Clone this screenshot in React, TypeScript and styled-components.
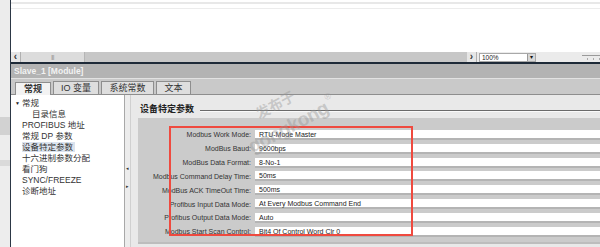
import styled, { createGlobalStyle } from "styled-components";

const fields = [
  { label: "Modbus Work Mode:", value: "RTU-Mode Master" },
  { label: "ModBus Baud:", value: "9600bps" },
  { label: "ModBus Data Format:", value: "8-No-1" },
  { label: "Modbus Command Delay Time:", value: "50ms" },
  { label: "ModBus ACK TimeOut Time:", value: "500ms" },
  { label: "Profibus Input Data Mode:", value: "At Every Modbus Command End" },
  { label: "Profibus Output Data Mode:", value: "Auto" },
  { label: "Modbus Start Scan Control:", value: "Bit4 Of Control Word Clr 0" },
];

const tree = [
  { text: "常规", level: 0, open: true },
  { text: "目录信息", level: 2 },
  { text: "PROFIBUS 地址", level: 1 },
  { text: "常规 DP 参数", level: 1 },
  { text: "设备特定参数", level: 1, selected: true },
  { text: "十六进制参数分配", level: 1 },
  { text: "看门狗", level: 1 },
  { text: "SYNC/FREEZE", level: 1 },
  { text: "诊断地址", level: 1 },
];

const tabs = [
  { text: "常规", width: 36 },
  { text: "IO 变量", width: 46 },
  { text: "系统常数", width: 53 },
  { text: "文本", width: 35 },
];

function App() {
  return (
    <Page>
      <GlobalStyle />
      <Strip />
      <Main>
        <Canvas />
        <ScrollRow>
          <ArrowBtn>‹</ArrowBtn>
          <Thumb>|||</Thumb>
          <Track />
          <ArrowBtn>›</ArrowBtn>
          <ZoomArea>
            <ZoomBox>
              <span>100%</span>
              <DropBtn>▾</DropBtn>
            </ZoomBox>
            <Slider />
          </ZoomArea>
        </ScrollRow>
        <DarkLine />
        <TitleBar>Slave_1 [Module]</TitleBar>
        <TabBar>
          {tabs.map((t, i) => (
            <Tab key={t.text} $active={i === 0} $width={t.width}>
              {t.text}
            </Tab>
          ))}
        </TabBar>
        <Body>
          <Tree>
            {tree.map((item) => (
              <TreeItem key={item.text} $level={item.level}>
                {item.open && <Caret>▼</Caret>}
                <TreeText $selected={item.selected}>{item.text}</TreeText>
              </TreeItem>
            ))}
          </Tree>
          <Splitter>
            <SplitArrow>◂</SplitArrow>
            <SplitArrow>▸</SplitArrow>
          </Splitter>
          <Content>
            <SectionTitle>
              <span>设备特定参数</span>
              <Rule />
            </SectionTitle>
            <Box>
              {fields.map((f) => (
                <Row key={f.label}>
                  <Label>{f.label}</Label>
                  <Input>{f.value}</Input>
                </Row>
              ))}
              <Highlight />
            </Box>
          </Content>
        </Body>
      </Main>
      <Watermark>
        <WmCn>发布于</WmCn>
        <WmEn>
          gongkong<sup>®</sup>
        </WmEn>
      </Watermark>
    </Page>
  );
}

export default App;

const GlobalStyle = createGlobalStyle`
  html, body {
    margin: 0;
    padding: 0;
    background: #ffffff;
  }
  body {
    font-family: "Liberation Sans", "Noto Sans CJK SC", sans-serif;
    color: #333;
  }
`;

const Page = styled.div`
  position: relative;
  display: flex;
  width: 600px;
  height: 247px;
  overflow: hidden;
`;

const Strip = styled.div`
  width: 10px;
  flex: none;
  background:
    linear-gradient(#ececec, #ececec) 0 0 / 100% 60px no-repeat,
    linear-gradient(#d2d2d2, #d2d2d2) 0 117px / 100% 18px no-repeat,
    linear-gradient(#dadada, #dadada) 0 160px / 100% 6px no-repeat,
    #ededed;
`;

const Main = styled.div`
  flex: 1;
  display: flex;
  flex-direction: column;
  border-left: 1px solid #2c3745;
  min-width: 0;
`;

const Canvas = styled.div`
  height: 50px;
  background: #fff;
  border-top: 2px solid #fff;
  box-shadow: inset 0 2px 0 #e8e8e8, inset 0 6px 0 #fff, inset 0 7px 0 #ececec;
`;

const ScrollRow = styled.div`
  height: 10px;
  display: flex;
  align-items: stretch;
  background: #c7c7c7;
`;

const ArrowBtn = styled.div`
  width: 9px;
  background: #e6e6e6;
  border-right: 1px solid #b0b0b0;
  font-size: 10px;
  line-height: 9px;
  text-align: center;
  color: #333;
  font-weight: bold;
`;

const Thumb = styled.div`
  width: 63px;
  background: #dcdcdc;
  border-right: 1px solid #b5b5b5;
  font-size: 5px;
  line-height: 10px;
  letter-spacing: -0.5px;
  text-align: center;
  color: #777;
`;

const Track = styled.div`
  flex: 1;
`;

const ZoomArea = styled.div`
  width: 121px;
  display: flex;
  align-items: center;
  background: #ebebeb;
  padding-left: 2px;
`;

const ZoomBox = styled.div`
  width: 57px;
  height: 9px;
  display: flex;
  justify-content: space-between;
  align-items: center;
  background: #fff;
  border: 1px solid #a8a8a8;
  box-sizing: border-box;
  font-size: 6.5px;
  color: #222;
  padding-left: 2px;
`;

const DropBtn = styled.span`
  width: 7px;
  height: 7px;
  background: #d8d8d8;
  border-left: 1px solid #999;
  font-size: 6px;
  line-height: 7px;
  text-align: center;
  color: #111;
`;

const Slider = styled.div`
  margin-left: auto;
  width: 18px;
  height: 4px;
  border-top: 1px solid #9a9a9a;
  background: repeating-linear-gradient(90deg, transparent 0 5px, #aaa 5px 6px) 0 2px / 100% 2px no-repeat;
`;

const DarkLine = styled.div`
  height: 2px;
  background: #1e2a38;
`;

const TitleBar = styled.div`
  height: 14px;
  background: #b3b3b3;
  color: #f2f2f2;
  font-size: 8.5px;
  font-weight: bold;
  line-height: 14px;
  padding-left: 3px;
`;

const TabBar = styled.div`
  height: 15px;
  background: #c9c9c9;
  border-top: 1px solid #e2e2e2;
  border-bottom: 1px solid #8e8e8e;
  display: flex;
  align-items: flex-end;
  gap: 2px;
  padding-left: 4px;
`;

const Tab = styled.div<{ $active?: boolean; $width: number }>`
  width: ${(p) => p.$width}px;
  height: 13px;
  box-sizing: border-box;
  background: ${(p) => (p.$active ? "#f3f3f3" : "#dedede")};
  border: 1px solid #8e8e8e;
  border-bottom: none;
  margin-bottom: ${(p) => (p.$active ? "-1px" : "0")};
  font-size: 9px;
  font-weight: ${(p) => (p.$active ? "bold" : "normal")};
  line-height: 12px;
  text-align: center;
  color: #333;
`;

const Body = styled.div`
  flex: 1;
  display: flex;
  min-height: 0;
`;

const Tree = styled.div`
  width: 113px;
  background: #fff;
  padding-top: 2px;
`;

const TreeItem = styled.div<{ $level: number }>`
  height: 11px;
  display: flex;
  align-items: center;
  padding-left: ${(p) => (p.$level === 0 ? 4 : p.$level === 1 ? 11 : 21)}px;
  font-size: 8.5px;
  color: #333;
`;

const Caret = styled.span`
  font-size: 5px;
  width: 7px;
  color: #222;
`;

const TreeText = styled.span<{ $selected?: boolean }>`
  background: ${(p) => (p.$selected ? "#dbe3ee" : "transparent")};
  line-height: 10px;
  padding-right: 2px;
`;

const Splitter = styled.div`
  width: 5px;
  background: #ececec;
  border-left: 1px solid #a8a8a8;
  border-right: 1px solid #d0d0d0;
  display: flex;
  flex-direction: column;
  align-items: center;
  padding-top: 70px;
  gap: 12px;
`;

const SplitArrow = styled.span`
  font-size: 5px;
  line-height: 6px;
  color: #333;
`;

const Content = styled.div`
  flex: 1;
  background: #e9e9e9;
  padding: 8px 0 0 7px;
  display: flex;
  flex-direction: column;
`;

const SectionTitle = styled.div`
  display: flex;
  align-items: center;
  gap: 6px;
  height: 10px;
  font-size: 9px;
  font-weight: bold;
  color: #222;
  padding-left: 2px;
`;

const Rule = styled.div`
  flex: 1;
  height: 1px;
  margin-top: 5px;
  background: #6a6a6a;
  box-shadow: 0 1px 0 #fafafa;
`;

const Box = styled.div`
  position: relative;
  margin-top: 5px;
  height: 126px;
  box-sizing: border-box;
  background: #cbcbcb;
  border-bottom: 2px solid #bdbdbd;
  padding-top: 10px;
`;

const Row = styled.div`
  height: 13.85px;
  display: flex;
  align-items: center;
  gap: 4px;
`;

const Label = styled.div`
  width: 113px;
  flex: none;
  text-align: right;
  font-size: 7px;
  color: #333;
  white-space: nowrap;
`;

const Input = styled.div`
  flex: 1;
  height: 10px;
  box-sizing: border-box;
  background: #fff;
  border-bottom: 2px solid #b4b4b4;
  font-size: 7px;
  line-height: 9px;
  padding-left: 4px;
  color: #222;
  white-space: nowrap;
`;

const Highlight = styled.div`
  position: absolute;
  left: 31px;
  top: 8px;
  width: 244px;
  height: 110px;
  border: 2px solid #ef4a3f;
  box-sizing: border-box;
  pointer-events: none;
`;

const Watermark = styled.div`
  position: absolute;
  left: 254px;
  top: 114px;
  transform: rotate(-28deg);
  transform-origin: left bottom;
  color: rgba(150, 150, 150, 0.42);
  pointer-events: none;
  display: flex;
  flex-direction: column;
  align-items: flex-start;
`;

const WmCn = styled.div`
  font-size: 14px;
  font-weight: bold;
  margin-left: 22px;
  line-height: 15px;
`;

const WmEn = styled.div`
  font-family: "Liberation Sans", sans-serif;
  font-size: 19px;
  font-weight: bold;
  line-height: 18px;
  letter-spacing: -0.5px;

  sup {
    font-size: 9px;
    font-weight: normal;
    vertical-align: 12px;
    margin-left: 2px;
  }
`;
